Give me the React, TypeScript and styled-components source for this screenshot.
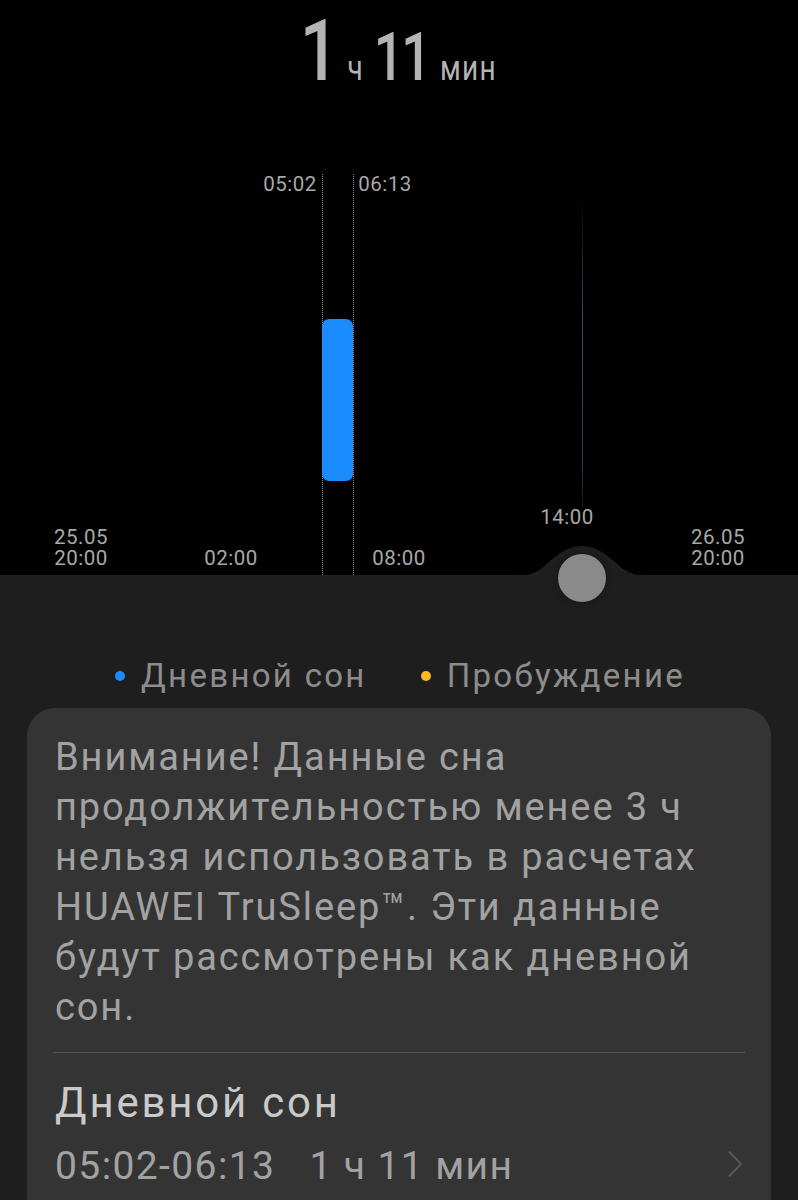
import styled, { createGlobalStyle } from 'styled-components';

const GlobalStyle = createGlobalStyle`
  html, body {
    margin: 0;
    padding: 0;
    background: #1e1e1e;
  }
  * { box-sizing: border-box; }
`;

const font = `Roboto, "Noto Sans", sans-serif`;

// chart geometry: 20:00 of the first day sits at x=82, one hour is ~26.55px
const X0 = 82;
const HOUR = 26.55;
const xAt = (h: number) => X0 + h * HOUR;

const Page = styled.div`
  width: 798px;
  min-height: 1200px;
  background: #1e1e1e;
  font-family: ${font};
  overflow: hidden;
`;

const Night = styled.section`
  position: relative;
  height: 575px;
  background: #000;
`;

const Duration = styled.div`
  display: flex;
  justify-content: center;
  align-items: baseline;
  padding: 0 0 0 10px;
  height: 110px;
  color: #b4b4b4;
  transform: scaleX(0.8);
`;

const Num = styled.span<{ $size: number }>`
  font-size: ${(p) => p.$size}px;
  font-weight: 500;
  line-height: normal;
  letter-spacing: -3px;
`;

const Unit = styled.span`
  font-size: 35px;
  line-height: 1;
  letter-spacing: 1.5px;
  margin: 0 12px 0 14px;
`;

const Canvas = styled.div`
  position: absolute;
  inset: 0;
`;

const TimeLabel = styled.div<{ $x: number; $y: number; $align?: 'left' | 'right' }>`
  position: absolute;
  top: ${(p) => p.$y}px;
  left: ${(p) => p.$x}px;
  transform: translateX(${(p) => (p.$align === 'right' ? '-100%' : p.$align === 'left' ? '0' : '-50%')});
  display: flex;
  flex-direction: column;
  align-items: center;
  color: #a8a8a8;
  font-size: 20.5px;
  line-height: 21px;
  letter-spacing: 0.5px;
  white-space: nowrap;
`;

const Dotted = styled.div<{ $x: number }>`
  position: absolute;
  left: ${(p) => p.$x}px;
  top: 174px;
  bottom: 0;
  border-left: 1px dotted #8c8c8c;
`;

const SleepBar = styled.div`
  position: absolute;
  top: 319px;
  height: 162px;
  background: #1a8cff;
  border-radius: 7px;
`;

const NowLine = styled.div<{ $x: number }>`
  position: absolute;
  left: ${(p) => p.$x}px;
  top: 194px;
  height: 314px;
  width: 1px;
  background: linear-gradient(180deg, rgba(70, 60, 100, 0) 0%, #4a4466 40%, #3a3552 85%, rgba(60, 55, 80, 0.4) 100%);
`;

const Hump = styled.svg<{ $x: number }>`
  position: absolute;
  left: ${(p) => p.$x - 78}px;
  bottom: -1px;
  width: 156px;
  height: 32px;
`;

const Knob = styled.div<{ $x: number }>`
  position: absolute;
  left: ${(p) => p.$x - 24}px;
  top: 554px;
  width: 48px;
  height: 48px;
  border-radius: 50%;
  background: #8a8a8a;
  box-shadow: 0 0 6px rgba(0, 0, 0, 0.35);
  z-index: 2;
`;

const Legend = styled.div`
  display: flex;
  justify-content: center;
  gap: 54px;
  padding: 68px 0 0 2px;
  height: 133px;
`;

const LegendItem = styled.div<{ $dot: string }>`
  display: flex;
  align-items: center;
  gap: 16px;
  color: #8c8c8c;
  font-size: 33px;
  line-height: 40px;
  letter-spacing: 2.3px;
  &::before {
    content: '';
    width: 10px;
    height: 10px;
    border-radius: 50%;
    background: ${(p) => p.$dot};
  }
`;

const Card = styled.div`
  margin: 0 27px;
  background: #343434;
  border-radius: 28px;
  padding: 24px 26px 0 28px;
  min-height: 520px;
`;

const Notice = styled.p`
  margin: 0;
  color: #a2a2a2;
  font-size: 38px;
  line-height: 50px;
  letter-spacing: 1.9px;
`;

const Divider = styled.hr`
  border: 0;
  height: 1px;
  background: #555;
  margin: 20px 0 22px -2px;
`;

const Row = styled.div`
  display: flex;
  align-items: flex-end;
  justify-content: space-between;
`;

const RowText = styled.div`
  display: flex;
  flex-direction: column;
`;

const RowTitle = styled.div`
  color: #cacaca;
  font-size: 42px;
  line-height: 56px;
  letter-spacing: 2.8px;
`;

const RowSub = styled.div`
  display: flex;
  gap: 34px;
  margin-top: 11px;
  color: #a2a2a2;
  font-size: 39px;
  line-height: 48px;
  letter-spacing: 1.4px;
`;

const Chevron = styled.svg`
  width: 16px;
  height: 28px;
  margin: 0 2px 12px 0;
`;

export default function App() {
  const start = 9 + 2 / 60;
  const end = 10 + 13 / 60;
  const now = 18.85;

  return (
    <Page>
      <GlobalStyle />
      <Night>
        <Duration>
          <Num $size={86}>1</Num>
          <Unit>ч</Unit>
          <Num $size={66}>11</Num>
          <Unit>мин</Unit>
        </Duration>
        <Canvas>
          <TimeLabel $x={xAt(start) - 5} $y={174} $align="right">05:02</TimeLabel>
          <TimeLabel $x={xAt(end) + 5} $y={174} $align="left">06:13</TimeLabel>
          <Dotted $x={xAt(start)} />
          <Dotted $x={xAt(end)} />
          <SleepBar style={{ left: xAt(start), width: xAt(end) - xAt(start) }} />
          <NowLine $x={xAt(now)} />

          <TimeLabel $x={81} $y={527}>
            <span>25.05</span>
            <span>20:00</span>
          </TimeLabel>
          <TimeLabel $x={231} $y={548}>02:00</TimeLabel>
          <TimeLabel $x={399} $y={548}>08:00</TimeLabel>
          <TimeLabel $x={567} $y={507}>14:00</TimeLabel>
          <TimeLabel $x={718} $y={527}>
            <span>26.05</span>
            <span>20:00</span>
          </TimeLabel>

          <Hump $x={xAt(now)} viewBox="0 0 156 32" preserveAspectRatio="none">
            <path
              d="M0 32 C 22 32 28 31 38 24 C 52 12 62 2 78 2 C 94 2 104 12 118 24 C 128 31 134 32 156 32 Z"
              fill="#1e1e1e"
            />
          </Hump>
          <Knob $x={xAt(now)} />
        </Canvas>
      </Night>

      <Legend>
        <LegendItem $dot="#1a8cff">Дневной сон</LegendItem>
        <LegendItem $dot="#f7b728">Пробуждение</LegendItem>
      </Legend>

      <Card>
        <Notice>
          Внимание! Данные сна продолжительностью менее 3 ч нельзя использовать в расчетах
          HUAWEI TruSleep™. Эти данные будут рассмотрены как дневной сон.
        </Notice>
        <Divider />
        <Row>
          <RowText>
            <RowTitle>Дневной сон</RowTitle>
            <RowSub>
              <span>05:02-06:13</span>
              <span>1 ч 11 мин</span>
            </RowSub>
          </RowText>
          <Chevron viewBox="0 0 16 28">
            <path d="M2 1.5 L14 14 L2 26.5" fill="none" stroke="#585858" strokeWidth="2" />
          </Chevron>
        </Row>
      </Card>
    </Page>
  );
}
